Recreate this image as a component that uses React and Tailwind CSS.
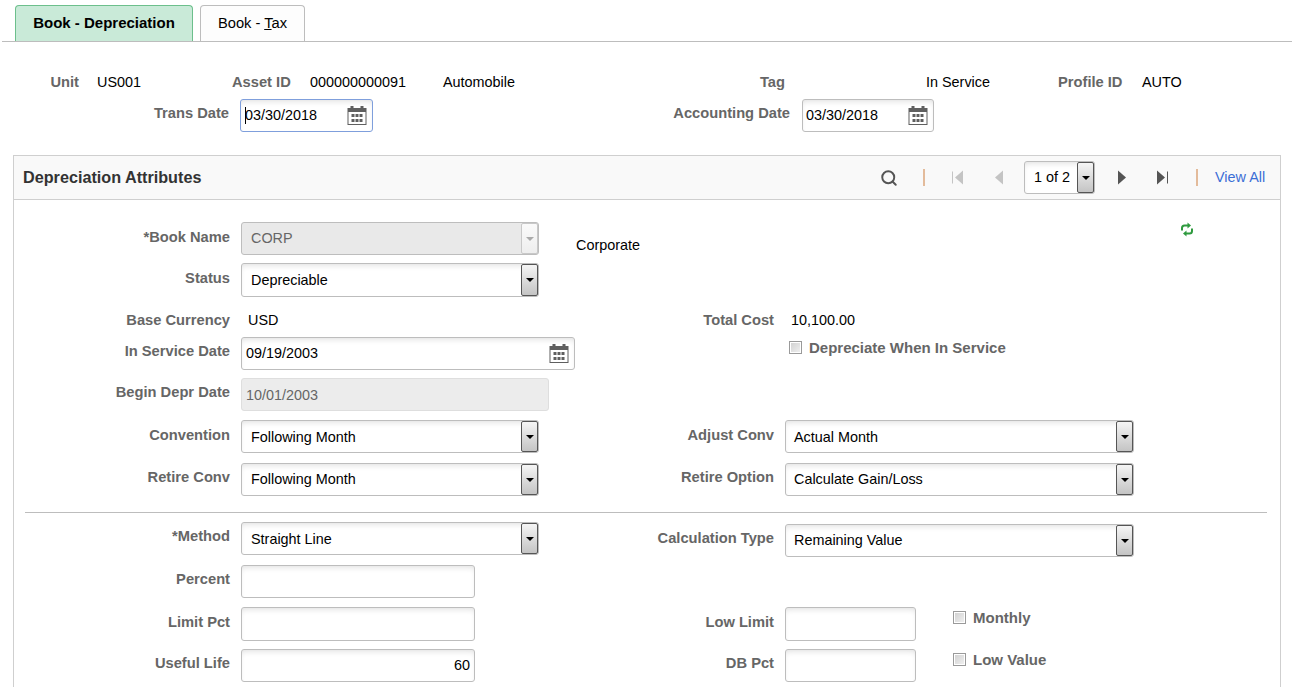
import { Search } from "lucide-react";

const font = { fontFamily: '"Liberation Sans", Arial, sans-serif' };

function CalendarIcon() {
  return (
    <svg width="22" height="21" viewBox="0 0 21 21" className="shrink-0">
      <path d="M1 3h3V1h3v2h7V1h3v2h3v17H1z" fill="#5f5f5f" />
      <rect x="2" y="7" width="17" height="12" fill="#fff" />
      <g fill="#5f5f5f">
        <rect x="5" y="9" width="3" height="3" />
        <rect x="9" y="9" width="3" height="3" />
        <rect x="13" y="9" width="3" height="3" />
        <rect x="5" y="14" width="3" height="3" />
        <rect x="9" y="14" width="3" height="3" />
        <rect x="13" y="14" width="3" height="3" />
      </g>
    </svg>
  );
}

function RefreshIcon() {
  return (
    <svg width="14" height="15" viewBox="0 0 14 15" fill="none" stroke="#2e9a3e" strokeWidth="2">
      <path d="M2 8.500V6C2 4.500 3 3.500 4.500 3.500H8" />
      <path d="M12 6.500V9c0 1.500-1 2.500-2.500 2.500H6" />
      <path d="M7.500 0.500l3.500 3-3.500 3z" fill="#2e9a3e" stroke="none" />
      <path d="M6.500 8.500l-3.500 3 3.500 3z" fill="#2e9a3e" stroke="none" />
    </svg>
  );
}

function DropButton({ disabled }) {
  return (
    <span
      className={`flex h-full w-[17px] shrink-0 items-center justify-center rounded-[2px] border ${
        disabled
          ? "border-[#c8c8c8] bg-gradient-to-b from-[#fafafa] to-[#eeeeee]"
          : "border-[#555] bg-gradient-to-b from-[#f5f5f5] to-[#c4c4c4]"
      }`}
    >
      <span
        className={`h-0 w-0 border-x-[4px] border-t-[4px] border-x-transparent ${
          disabled ? "border-t-[#aaa]" : "border-t-black"
        }`}
      />
    </span>
  );
}

function Select({ value, className = "", textClass = "", disabled }) {
  return (
    <div
      className={`flex items-center justify-between rounded-[3px] border border-[#bdbdbd] text-[14.4px] ${
        disabled
          ? "bg-[#e9e9e9] text-[#666]"
          : "bg-white text-black shadow-[inset_0_4px_6px_-3px_rgba(0,0,0,0.14)]"
      } ${className}`}
    >
      <span className={textClass}>{value}</span>
      <DropButton disabled={disabled} />
    </div>
  );
}

function Input({ value = "", className = "", textClass = "", date, disabled, right, focus }) {
  return (
    <div
      className={`flex items-center justify-between rounded-[3px] border text-[14.4px] ${
        focus ? "border-[#7f9fdc] shadow-[0_0_2px_rgba(90,130,220,0.5)]" : "border-[#bdbdbd]"
      } ${
        disabled
          ? "border-[#dedede] bg-[#ececec] text-[#666]"
          : "bg-white text-black shadow-[inset_0_4px_6px_-3px_rgba(0,0,0,0.14)]"
      } ${right ? "justify-end px-1" : "pr-[4px] pl-[3px]"} ${className}`}
    >
      <span className={`flex items-center ${textClass}`}>
        {focus && <span className="mr-[-1px] h-[17px] w-px bg-black" />}
        {value}
      </span>
      {date && <CalendarIcon />}
    </div>
  );
}

function Label({ children, className = "" }) {
  return (
    <div className={`shrink-0 text-right text-[14.7px] leading-[16px] font-bold text-[#666] ${className}`}>
      {children}
    </div>
  );
}

function Check({ label, className = "" }) {
  return (
    <div className={`flex items-start ${className}`}>
      <span className="mt-[1px] h-[13px] w-[13px] shrink-0 border border-[#9a9a9a] bg-gradient-to-br from-[#cfcfcf] to-[#f2f2f2] shadow-[inset_0_0_0_1px_#fff]" />
      <span className="ml-[7px] text-[15px] leading-[16px] font-bold text-[#666]">{label}</span>
    </div>
  );
}

function LeftLabel({ children, className = "" }) {
  return <Label className={`mr-[11px] w-[216px] ${className}`}>{children}</Label>;
}

function RightLabel({ children, className = "" }) {
  return <Label className={`mr-[11px] w-[160px] ${className}`}>{children}</Label>;
}

function App() {
  return (
    <div style={font} className="h-[687px] w-[1292px] overflow-hidden bg-white text-[14.4px] text-black">
      <div className="ml-[2px] flex h-[42px] items-end border-b border-[#bdbdbd] pl-[13px]">
        <div className="flex h-[36px] w-[178px] items-center justify-center rounded-t-[4px] border border-b-0 border-[#6cbf8c] bg-[#c9ead8] text-[15px] font-bold">
          Book - Depreciation
        </div>
        <div className="ml-[7px] flex h-[36px] w-[105px] items-center justify-center rounded-t-[4px] border border-b-0 border-[#bdbdbd] bg-[#fdfdfd] text-[14.7px]">
          <span>
            Book - <span className="underline">T</span>ax
          </span>
        </div>
      </div>

      <div className="mt-[31px] flex h-[18px] items-center leading-[18px]">
        <Label className="w-[79px]">Unit</Label>
        <span className="ml-[18px] w-[135px]">US001</span>
        <Label className="w-[78px] !text-left">Asset ID</Label>
        <span className="w-[133px]">000000000091</span>
        <span className="w-[260px]">Automobile</span>
        <Label className="w-[82px]">Tag</Label>
        <span className="ml-[141px] w-[132px]">In Service</span>
        <Label className="w-[84px] !text-left">Profile ID</Label>
        <span>AUTO</span>
      </div>

      <div className="mt-[8px] flex h-[33px]">
        <Label className="w-[229px] pt-[6px]">Trans Date</Label>
        <Input focus value="03/30/2018" date className="ml-[11px] w-[133px] !pl-[4px]" />
        <Label className="w-[417px] pt-[6px]">Accounting Date</Label>
        <Input value="03/30/2018" date className="ml-[12px] w-[132px]" />
      </div>

      <div className="mt-[23px] ml-[13px] h-[600px] w-[1268px] border border-[#cfcfcf]">
        <div className="flex h-[44px] items-center border-b border-[#cfcfcf] bg-[#f9f9f9] pr-[15px] pl-[9px]">
          <h2 className="text-[16.2px] font-bold text-[#333]">Depreciation Attributes</h2>
          <div className="ml-auto flex items-center">
            <Search size={18} strokeWidth={2.6} className="text-[#555]" />
            <span className="ml-[25px] h-[17px] w-[2px] bg-[#e3bb9b]" />
            <svg width="12" height="15" viewBox="0 0 12 14" className="ml-[27px]">
              <path d="M0 1h1v12H0zM11 0v14L3 7z" fill="#c4c4c4" />
            </svg>
            <svg width="10" height="15" viewBox="0 0 10 14" className="ml-[30px]">
              <path d="M9 0v14L1 7z" fill="#c4c4c4" />
            </svg>
            <div className="ml-[20px] flex h-[33px] w-[71px] items-center justify-between rounded-[3px] border border-[#bdbdbd] bg-white pl-[9px] shadow-[inset_0_4px_6px_-3px_rgba(0,0,0,0.14)]">
              <span>1 of 2</span>
              <DropButton />
            </div>
            <svg width="10" height="15" viewBox="0 0 10 14" className="ml-[22px]">
              <path d="M1 0v14l8-7z" fill="#555" />
            </svg>
            <svg width="12" height="15" viewBox="0 0 12 14" className="ml-[30px]">
              <path d="M0 0v14l8-7zM10 1h1v12h-1z" fill="#555" />
            </svg>
            <span className="ml-[27px] h-[17px] w-[2px] bg-[#e3bb9b]" />
            <a className="ml-[17px] w-[50px] text-right whitespace-nowrap text-[#3b6ed6]">View All</a>
          </div>
        </div>

        <div>
          <div className="mt-[22px] flex h-[33px]">
            <LeftLabel className="pt-[7px]">*Book Name</LeftLabel>
            <Select disabled value="CORP" className="w-[298px]" textClass="pl-[9px]" />
            <span className="mt-[15px] ml-[37px] leading-[16px]">Corporate</span>
            <div className="mr-[86px] ml-auto">
              <RefreshIcon />
            </div>
          </div>

          <div className="mt-[8px] flex h-[34px]">
            <LeftLabel className="pt-[7px]">Status</LeftLabel>
            <Select value="Depreciable" className="w-[298px]" textClass="pl-[9px] pt-[2px]" />
          </div>

          <div className="mt-[13px] flex h-[20px]">
            <div className="flex w-[600px] items-center">
              <LeftLabel>Base Currency</LeftLabel>
              <span className="ml-[7px] pt-[2px]">USD</span>
            </div>
            <div className="flex items-center">
              <RightLabel>Total Cost</RightLabel>
              <span className="ml-[6px] pt-[2px]">10,100.00</span>
            </div>
          </div>

          <div className="mt-[7px] flex h-[33px]">
            <div className="flex w-[775px]">
              <LeftLabel className="pt-[6px]">In Service Date</LeftLabel>
              <Input value="09/19/2003" date className="w-[334px] !pl-[4px]" />
            </div>
            <Check label="Depreciate When In Service" className="mt-[3px]" />
          </div>

          <div className="mt-[8px] flex h-[33px]">
            <LeftLabel className="pt-[6px]">Begin Depr Date</LeftLabel>
            <Input disabled value="10/01/2003" className="w-[308px] !pl-[4px]" textClass="pt-[3px]" />
          </div>

          <div className="mt-[9px] flex h-[33px]">
            <div className="flex w-[600px]">
              <LeftLabel className="pt-[7px]">Convention</LeftLabel>
              <Select value="Following Month" className="w-[298px]" textClass="pl-[9px] pt-[3px]" />
            </div>
            <RightLabel className="pt-[7px]">Adjust Conv</RightLabel>
            <Select value="Actual Month" className="w-[349px]" textClass="pl-[8px] pt-[3px]" />
          </div>

          <div className="mt-[10px] flex h-[33px]">
            <div className="flex w-[600px]">
              <LeftLabel className="pt-[6px]">Retire Conv</LeftLabel>
              <Select value="Following Month" className="w-[298px]" textClass="pl-[9px]" />
            </div>
            <RightLabel className="pt-[6px]">Retire Option</RightLabel>
            <Select value="Calculate Gain/Loss" className="w-[349px]" textClass="pl-[8px]" />
          </div>

          <div className="mt-[16px] ml-[11px] h-px w-[1242px] bg-[#bdbdbd]" />

          <div className="mt-[9px] flex h-[35px]">
            <div className="flex w-[600px]">
              <LeftLabel className="pt-[6px]">*Method</LeftLabel>
              <Select value="Straight Line" className="h-[33px] w-[298px]" textClass="pl-[9px] pt-[3px]" />
            </div>
            <RightLabel className="pt-[8px]">Calculation Type</RightLabel>
            <Select value="Remaining Value" className="mt-[2px] h-[33px] w-[349px]" textClass="pl-[8px]" />
          </div>

          <div className="mt-[8px] flex h-[33px]">
            <LeftLabel className="pt-[6px]">Percent</LeftLabel>
            <Input className="w-[234px]" />
          </div>

          <div className="mt-[9px] flex h-[34px]">
            <div className="flex w-[600px]">
              <LeftLabel className="pt-[7px]">Limit Pct</LeftLabel>
              <Input className="w-[234px]" />
            </div>
            <RightLabel className="pt-[7px]">Low Limit</RightLabel>
            <Input className="w-[131px]" />
            <Check label="Monthly" className="mt-[3px] ml-[37px]" />
          </div>

          <div className="mt-[8px] flex h-[33px]">
            <div className="flex w-[600px]">
              <LeftLabel className="pt-[6px]">Useful Life</LeftLabel>
              <Input right value="60" className="w-[234px]" />
            </div>
            <RightLabel className="pt-[6px]">DB Pct</RightLabel>
            <Input className="w-[131px]" />
            <Check label="Low Value" className="mt-[3px] ml-[37px]" />
          </div>
        </div>
      </div>
    </div>
  );
}

export default App;
